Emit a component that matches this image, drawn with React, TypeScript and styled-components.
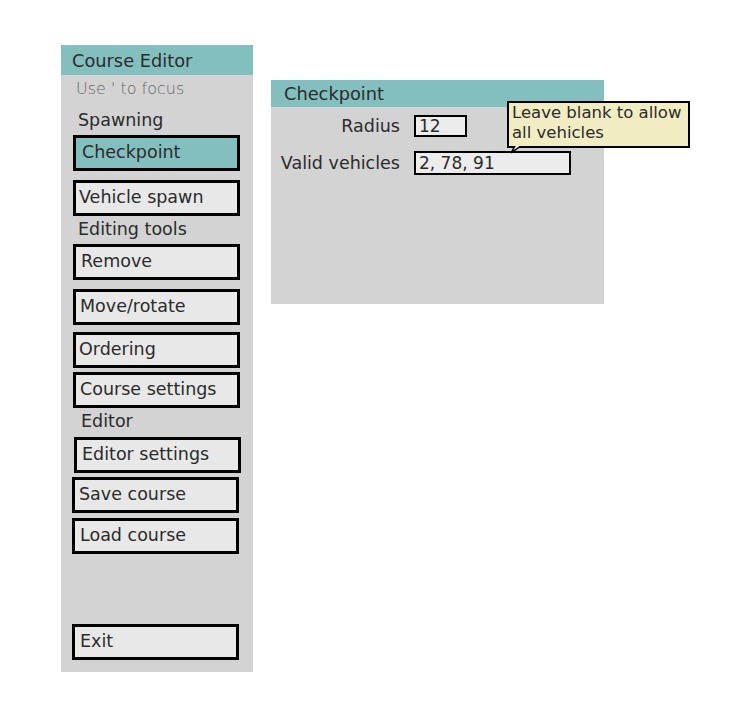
import styled, { createGlobalStyle } from 'styled-components'

const GlobalStyle = createGlobalStyle`
  html, body {
    margin: 0;
    padding: 0;
    background: #ffffff;
  }
  body {
    font-family: 'DejaVu Sans', 'Liberation Sans', sans-serif;
    color: #2b2b2b;
  }
`

const Page = styled.div`
  display: flex;
  align-items: flex-start;
  gap: 18px;
  padding: 45px 0 0 61px;
`

const SidePanel = styled.div`
  width: 192px;
  height: 627px;
  background: #d3d3d3;
  display: flex;
  flex-direction: column;
`

const PanelHeader = styled.div<{ $height: number; $indent: number }>`
  height: ${p => p.$height}px;
  background: #84bfbf;
  display: flex;
  align-items: center;
  padding-left: ${p => p.$indent}px;
  font-size: 17.8px;
  color: #2b2b2b;
  flex-shrink: 0;
`

const Hint = styled.div`
  margin: 5px 0 0 15px;
  font-size: 16px;
  line-height: 18px;
  color: #666666;
  font-weight: 300;
`

const SectionLabel = styled.div<{ $top: number; $indent: number }>`
  margin: ${p => p.$top}px 0 0 ${p => p.$indent}px;
  font-size: 17.5px;
  line-height: 20px;
`

const MenuButton = styled.button<{ $top: number; $left: number; $pad: number; $active?: boolean }>`
  margin: ${p => p.$top}px 0 0 ${p => p.$left}px;
  width: 167px;
  height: 36px;
  box-sizing: border-box;
  border: 3px solid #000;
  background: ${p => (p.$active ? '#84bfbf' : '#e8e8e8')};
  font-family: inherit;
  font-size: 17.5px;
  color: #2b2b2b;
  text-align: left;
  padding: 0 0 2px ${p => p.$pad}px;
  display: flex;
  align-items: center;
  flex-shrink: 0;
  cursor: pointer;
`

const Spacer = styled.div`
  flex: 1;
`

const BottomGap = styled.div`
  height: 12px;
  flex-shrink: 0;
`

const DetailPanel = styled.div`
  margin-top: 35px;
  width: 333px;
  height: 224px;
  background: #d3d3d3;
  position: relative;
`

const Form = styled.div`
  display: grid;
  grid-template-columns: 129px auto;
  column-gap: 14px;
  row-gap: 14px;
  padding-top: 8px;
  align-items: center;
`

const FieldLabel = styled.div`
  text-align: right;
  font-size: 17.5px;
  line-height: 20px;
`

const FieldInput = styled.div<{ $width: number; $height: number }>`
  width: ${p => p.$width}px;
  height: ${p => p.$height}px;
  box-sizing: border-box;
  border: 2px solid #000;
  background: #ececec;
  font-size: 17px;
  padding-left: 3px;
  display: flex;
  align-items: center;
`

const Tooltip = styled.div`
  position: absolute;
  left: 236px;
  top: 21px;
  width: 183px;
  height: 47px;
  box-sizing: border-box;
  border: 2px solid #000;
  background: #f2ecc3;
  font-size: 16.5px;
  line-height: 20px;
  padding: 0 0 0 3px;
`

const TooltipTail = styled.svg`
  position: absolute;
  left: 2px;
  top: 43px;
`

export default function App() {
  return (
    <>
      <GlobalStyle />
      <Page>
        <SidePanel>
          <PanelHeader $height={30} $indent={11}>Course Editor</PanelHeader>
          <Hint>Use ' to focus</Hint>
          <SectionLabel $top={12} $indent={17}>Spawning</SectionLabel>
          <MenuButton $top={5} $left={12} $pad={6} $active>Checkpoint</MenuButton>
          <MenuButton $top={9} $left={12} $pad={3}>Vehicle spawn</MenuButton>
          <SectionLabel $top={3} $indent={17}>Editing tools</SectionLabel>
          <MenuButton $top={5} $left={12} $pad={5}>Remove</MenuButton>
          <MenuButton $top={9} $left={12} $pad={4}>Move/rotate</MenuButton>
          <MenuButton $top={7} $left={12} $pad={3}>Ordering</MenuButton>
          <MenuButton $top={4} $left={12} $pad={4}>Course settings</MenuButton>
          <SectionLabel $top={3} $indent={20}>Editor</SectionLabel>
          <MenuButton $top={6} $left={13} $pad={5}>Editor settings</MenuButton>
          <MenuButton $top={4} $left={11} $pad={4}>Save course</MenuButton>
          <MenuButton $top={5} $left={11} $pad={5}>Load course</MenuButton>
          <Spacer />
          <MenuButton $top={0} $left={11} $pad={5}>Exit</MenuButton>
          <BottomGap />
        </SidePanel>
        <DetailPanel>
          <PanelHeader $height={27} $indent={13}>Checkpoint</PanelHeader>
          <Form>
            <FieldLabel>Radius</FieldLabel>
            <FieldInput $width={53} $height={22}>12</FieldInput>
            <FieldLabel>Valid vehicles</FieldLabel>
            <FieldInput $width={157} $height={24}>2, 78, 91</FieldInput>
          </Form>
          <Tooltip>
            Leave blank to allow
            <br />
            all vehicles
            <TooltipTail width="14" height="8" viewBox="0 0 14 8">
              <path d="M4 0 L0 7 L10 0" fill="#f2ecc3" stroke="#000" strokeWidth="1.5" />
            </TooltipTail>
          </Tooltip>
        </DetailPanel>
      </Page>
    </>
  )
}
